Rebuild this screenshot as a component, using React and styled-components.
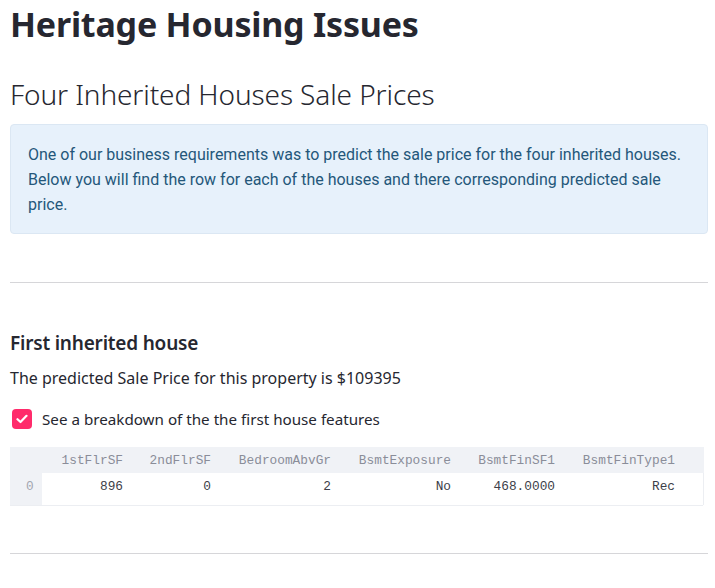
import React from 'react';
import styled, {createGlobalStyle} from 'styled-components';

const GlobalStyle = createGlobalStyle`
  html, body {
    margin: 0;
    padding: 0;
    background: #ffffff;
  }
  body {
    font-family: "Noto Sans", "Open Sans", sans-serif;
    color: #262730;
  }
`;

const Main = styled.main`
  width: 715px;
  height: 588px;
  overflow: hidden;
  box-sizing: border-box;
  padding: 0 7px 0 10px;
  display: flex;
  flex-direction: column;
`;

const Title = styled.h1`
  margin: 0;
  padding-top: 1px;
  font-size: 34px;
  line-height: 46px;
  font-weight: 700;
  letter-spacing: -0.2px;
`;

const Subtitle = styled.h2`
  margin: 28px 0 0;
  font-size: 28px;
  line-height: 38px;
  font-weight: 300;
  letter-spacing: -0.1px;
`;

const Info = styled.div`
  margin-top: 11px;
  padding: 17px 16px 16px 17px;
  background: #e7f1fb;
  border: 1px solid #dbe7f3;
  border-radius: 4px;
  color: #24577a;
  font-family: Roboto, "Liberation Sans", sans-serif;
  font-size: 16px;
  line-height: 25px;
`;

const Rule = styled.hr`
  margin: ${p => p.top}px 0 0;
  border: none;
  border-top: 1px solid #d6d6d9;
  height: 0;
`;

const Section = styled.h3`
  margin: 47px 0 0;
  font-size: 19px;
  line-height: 26px;
  font-weight: 600;
  letter-spacing: -0.2px;
`;

const Text = styled.p`
  margin: 10px 0 0;
  font-size: 16px;
  line-height: 24px;
`;

const CheckRow = styled.label`
  margin-top: 17px;
  display: flex;
  align-items: center;
  gap: 10px;
  font-size: 15.2px;
  line-height: 24px;
`;

const Box = styled.span`
  width: 20px;
  height: 20px;
  margin-left: 2px;
  border-radius: 4px;
  background: #ff2b6b;
  display: flex;
  align-items: center;
  justify-content: center;
`;

const Table = styled.div`
  margin-top: 16px;
  width: 693px;
  display: grid;
  grid-template-columns: 32px 95px 88px 120px 120px 104px 120px 1fr;
  font-family: "Liberation Mono", "DejaVu Sans Mono", monospace;
  font-size: 12.8px;
  border-bottom: 1px solid #eceef2;
`;

const Head = styled.div`
  height: 26px;
  line-height: 28px;
  overflow: hidden;
  background: #f0f2f6;
  color: #8a8d99;
  text-align: right;
  padding-right: 14px;
`;

const IndexCell = styled.div`
  height: 32px;
  line-height: 28px;
  background: #f0f2f6;
  color: #a3a6b0;
  text-align: left;
  padding-left: 16px;
`;

const Cell = styled.div`
  height: 32px;
  line-height: 27px;
  background: #ffffff;
  color: #3c3e48;
  text-align: right;
  padding-right: 14px;
  border-right: ${p => (p.last ? '1px solid #eceef2' : 'none')};
`;

const columns = ['1stFlrSF', '2ndFlrSF', 'BedroomAbvGr', 'BsmtExposure', 'BsmtFinSF1', 'BsmtFinType1'];
const row = ['896', '0', '2', 'No', '468.0000', 'Rec'];

export default function App() {
  return (
    <>
      <GlobalStyle/>
      <Main>
        <Title>Heritage Housing Issues</Title>
        <Subtitle>Four Inherited Houses Sale Prices</Subtitle>
        <Info>
          One of our business requirements was to predict the sale price for the four inherited houses.
          Below you will find the row for each of the houses and there corresponding predicted sale price.
        </Info>
        <Rule top={48}/>
        <Section>First inherited house</Section>
        <Text>The predicted Sale Price for this property is $109395</Text>
        <CheckRow>
          <Box>
            <svg width="12" height="10" viewBox="0 0 12 10" fill="none">
              <path d="M1.5 5.2 L4.5 8 L10.5 1.8" stroke="#fff" strokeWidth="2.2" strokeLinecap="round" strokeLinejoin="round"/>
            </svg>
          </Box>
          See a breakdown of the the first house features
        </CheckRow>
        <Table>
          <Head/>
          {columns.map(c => <Head key={c}>{c}</Head>)}
          <Head/>
          <IndexCell>0</IndexCell>
          {row.map((v, i) => <Cell key={i}>{v}</Cell>)}
          <Cell last/>
        </Table>
        <Rule top={47}/>
      </Main>
    </>
  );
}
